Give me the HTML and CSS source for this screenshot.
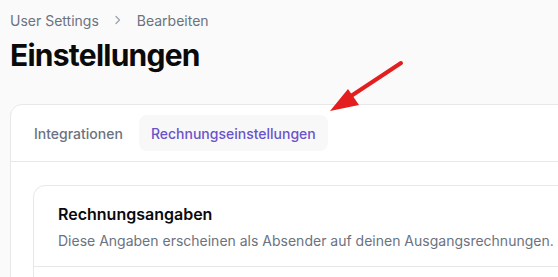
FILE: index.html
```html
<!DOCTYPE html>
<html lang="de">
<head>
    <meta charset="UTF-8">
    <title>Einstellungen</title>
    <link rel="stylesheet" href="styles.css">
</head>
<body>
    <div class="page">
        <nav class="crumbs">
            <span>User Settings</span>
            <svg class="chev" width="14" height="14" viewBox="0 0 14 14"><path d="M5 3.5 L8.5 7 L5 10.5" fill="none" stroke="#9ca3af" stroke-width="1.3" stroke-linecap="round" stroke-linejoin="round"/></svg>
            <span>Bearbeiten</span>
        </nav>
        <h1 class="title">Einstellungen</h1>

        <div class="card">
            <div class="tabs">
                <button class="tab">Integrationen</button>
                <button class="tab active">Rechnungseinstellungen</button>
            </div>
            <div class="tab-body">
                <div class="panel">
                    <div class="panel-head">
                        <h2>Rechnungsangaben</h2>
                        <p>Diese Angaben erscheinen als Absender auf deinen Ausgangsrechnungen.</p>
                    </div>
                    <div class="panel-body"></div>
                </div>
            </div>
        </div>
    </div>

    <!-- Markierungspfeil -->
    <svg class="arrow" width="120" height="70" viewBox="0 0 120 70">
        <line x1="101" y1="13" x2="45" y2="50" stroke="#e41e1e" stroke-width="4" stroke-linecap="round"/>
        <polygon points="30,61 48,39 59,55" fill="#e41e1e"/>
    </svg>
</body>
</html>
```

FILE: styles.css
```css
*{
    box-sizing: border-box;
}
html, body{
    height: 100%;
}
body{
    margin: 0;
    background: #fafafa;
    font-family: Inter, "Noto Sans", sans-serif;
    color: #111;
    overflow: hidden;
}
.page{
    padding: 10px 0 0 10px;
    width: 620px;
}
.crumbs{
    display: flex;
    align-items: center;
    gap: 8px;
    font-size: 14px;
    color: #6b7280;
    height: 20px;
}
.chev{
    margin: 0 4px;
}
.title{
    margin: 7px 0 0 0;
    font-size: 30px;
    font-weight: 700;
    letter-spacing: -0.75px;
    line-height: 36px;
    color: #0a0a0a;
}
.card{
    margin-top: 31px;
    background: #fff;
    border: 1px solid #e8e8e8;
    border-radius: 12px;
    height: 300px;
}
.tabs{
    display: flex;
    gap: 4px;
    padding: 10px 11px;
    border-bottom: 1px solid #e8e8e8;
}
.tab{
    border: 0;
    background: none;
    font-family: inherit;
    font-size: 14px;
    font-weight: 500;
    color: #6b7280;
    padding: 0 12px;
    height: 36px;
    border-radius: 8px;
}
.tab.active{
    background: #f8f8f9;
    color: #6a53c9;
}
.tab-body{
    padding: 23px 0 0 22px;
}
.panel{
    border: 1px solid #e8e8e8;
    border-radius: 12px;
    height: 200px;
}
.panel-head{
    padding: 18px 24px 15px;
    border-bottom: 1px solid #e8e8e8;
}
.panel-head h2{
    margin: 0;
    font-size: 16px;
    font-weight: 600;
    line-height: 20px;
    color: #0a0a0a;
}
.panel-head p{
    margin: 7px 0 0 0;
    font-size: 14px;
    line-height: 20px;
    color: #6b7280;
}
.arrow{
    position: absolute;
    left: 300px;
    top: 50px;
}
```
